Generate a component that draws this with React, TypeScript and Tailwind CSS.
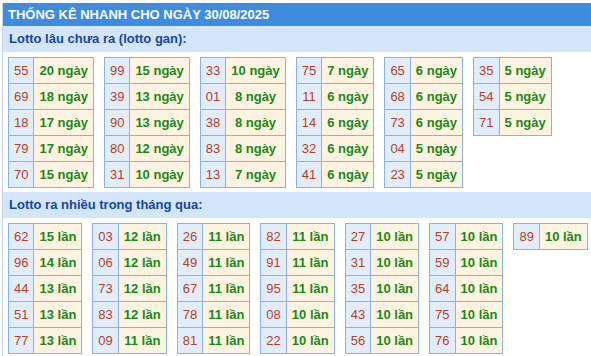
import React from 'react';

type Pair = [string, string];

const ganTables: Pair[][] = [
  [['55', '20'], ['69', '18'], ['18', '17'], ['79', '17'], ['70', '15']],
  [['99', '15'], ['39', '13'], ['90', '13'], ['80', '12'], ['31', '10']],
  [['33', '10'], ['01', '8'], ['38', '8'], ['83', '8'], ['13', '7']],
  [['75', '7'], ['11', '6'], ['14', '6'], ['32', '6'], ['41', '6']],
  [['65', '6'], ['68', '6'], ['73', '6'], ['04', '5'], ['23', '5']],
  [['35', '5'], ['54', '5'], ['71', '5']],
];

const hotTables: Pair[][] = [
  [['62', '15'], ['96', '14'], ['44', '13'], ['51', '13'], ['77', '13']],
  [['03', '12'], ['06', '12'], ['73', '12'], ['83', '12'], ['09', '11']],
  [['26', '11'], ['49', '11'], ['67', '11'], ['78', '11'], ['81', '11']],
  [['82', '11'], ['91', '11'], ['95', '11'], ['08', '10'], ['22', '10']],
  [['27', '10'], ['31', '10'], ['35', '10'], ['43', '10'], ['56', '10']],
  [['57', '10'], ['59', '10'], ['64', '10'], ['75', '10'], ['76', '10']],
  [['89', '10']],
];

const StatTable: React.FC<{ rows: Pair[]; unit: string }> = ({ rows, unit }) => (
  <table className="border-collapse border border-[#8cb0ef]">
    <tbody>
      {rows.map(([num, count]) => (
        <tr key={num}>
          <td className="border border-[#8cb0ef] bg-[#e2edfc] px-[5px] py-[5px] text-center leading-[15px] text-[#b5421e]">
            {num}
          </td>
          <td className="border border-[#8cb0ef] bg-[#fff3e1] px-[5px] py-[5px] text-center font-bold leading-[15px] text-[#188a18] whitespace-nowrap">
            {count} {unit}
          </td>
        </tr>
      ))}
    </tbody>
  </table>
);

const SectionTitle: React.FC<{ children: React.ReactNode }> = ({ children }) => (
  <div className="h-[26px] bg-[#d3e6fb] pl-[6px] font-bold leading-[26px] text-[#1447a4]">
    {children}
  </div>
);

export default function App() {
  return (
    <div className="min-h-screen bg-white pt-[3px] font-['Liberation_Sans',Arial,sans-serif] text-[13px]">
      <div className="ml-[2px] w-[calc(100%-2px)] border-l border-[#c6d8f0]">
        <div className="h-[23px] bg-[#3d8ce0] pl-[5px] font-bold leading-[23px] text-white">
          THỐNG KÊ NHANH CHO NGÀY 30/08/2025
        </div>

        {/* Lotto gan */}
        <SectionTitle>Lotto lâu chưa ra (lotto gan):</SectionTitle>
        <div className="flex items-start gap-[10px] pb-[4px] pl-[5px] pt-[5px]">
          {ganTables.map((rows, i) => (
            <StatTable key={i} rows={rows} unit="ngày" />
          ))}
        </div>

        {/* Lotto ra nhieu */}
        <SectionTitle>Lotto ra nhiều trong tháng qua:</SectionTitle>
        <div className="flex items-start gap-[10px] pb-[4px] pl-[5px] pt-[5px]">
          {hotTables.map((rows, i) => (
            <StatTable key={i} rows={rows} unit="lần" />
          ))}
        </div>
      </div>
    </div>
  );
}
